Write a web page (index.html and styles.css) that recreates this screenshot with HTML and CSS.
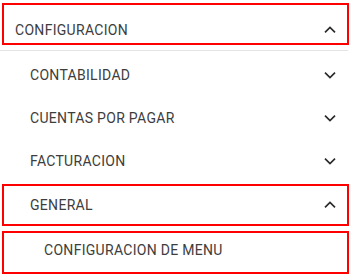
FILE: index.html
```html
<!DOCTYPE html>
<html>
<head>
<meta charset="utf-8">
<link rel="stylesheet" href="styles.css">
</head>
<body>
<div class="menu">
  <div class="item boxed top">
    <span class="label">CONFIGURACION</span>
    <svg class="chev" viewBox="0 0 12 8"><polyline points="1,6.3 6,1.5 11,6.3"/></svg>
  </div>
  <div class="divider"></div>
  <div class="item sub">
    <span class="label">CONTABILIDAD</span>
    <svg class="chev" viewBox="0 0 12 8"><polyline points="1,1.7 6,6.5 11,1.7"/></svg>
  </div>
  <div class="item sub">
    <span class="label">CUENTAS POR PAGAR</span>
    <svg class="chev" viewBox="0 0 12 8"><polyline points="1,1.7 6,6.5 11,1.7"/></svg>
  </div>
  <div class="item sub">
    <span class="label">FACTURACION</span>
    <svg class="chev" viewBox="0 0 12 8"><polyline points="1,1.7 6,6.5 11,1.7"/></svg>
  </div>
  <div class="item sub boxed general">
    <span class="label">GENERAL</span>
    <svg class="chev" viewBox="0 0 12 8"><polyline points="1,6.3 6,1.5 11,6.3"/></svg>
  </div>
  <div class="item leaf boxed">
    <span class="label">CONFIGURACION DE MENU</span>
  </div>
</div>
</body>
</html>
```

FILE: styles.css
```css
html, body {
  margin: 0;
  padding: 0;
  background: #ffffff;
}
body {
  font-family: Roboto, "Liberation Sans", Arial, sans-serif;
  font-size: 14px;
  color: #3d3d3d;
  width: 351px;
  height: 279px;
  overflow: hidden;
}
.menu {
  display: flex;
  flex-direction: column;
}
.item {
  display: flex;
  align-items: center;
  justify-content: space-between;
  box-sizing: border-box;
  margin: 0 2px;
  border: 2px solid transparent;
  padding-right: 11px;
}
.boxed {
  border-color: #ff0000;
}
.label {
  line-height: 16px;
  letter-spacing: 0.3px;
  white-space: nowrap;
}
.chev {
  width: 12px;
  height: 8px;
  fill: none;
  stroke: #2a2a2a;
  stroke-width: 1.7;
  flex: none;
}
.top {
  margin-top: 3px;
  height: 42px;
  padding-top: 11px;
  padding-left: 11px;
}
.divider {
  margin: 5px 0 0 0;
  width: 348px;
  height: 1px;
  background: #e4e4e4;
}
.sub {
  height: 43px;
  padding-left: 26px;
}
.divider + .sub {
  margin-top: 2px;
}
.general {
  height: 42px;
  margin-top: 2px;
}
.leaf {
  margin-top: 5px;
  height: 43px;
  padding-left: 40px;
  padding-bottom: 6px;
}
```
